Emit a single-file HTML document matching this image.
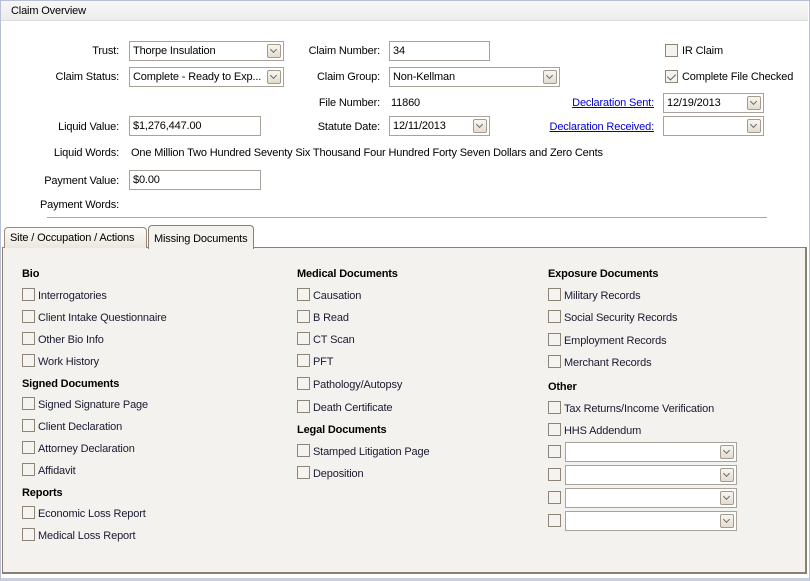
<!DOCTYPE html><html><head><style>
*{box-sizing:border-box;margin:0;padding:0}
body{width:810px;height:581px;background:#fff;font-family:"Liberation Sans",sans-serif;font-size:11px;letter-spacing:-0.15px;color:#000;position:relative;overflow:hidden}
.a,.lbl,.it,.h{transform:translateY(1px)}
.a{position:absolute;white-space:nowrap}
.frame{position:absolute;left:0;top:0;width:810px;height:581px;border:1px solid #b9c0d4;border-bottom:3px solid #c8d0e0}
.hdr{position:absolute;left:1px;top:1px;width:807px;height:20px;background:linear-gradient(#f7f7f7,#ececec);border-bottom:1px solid #dcdcdc;padding:4px 10px}
.lbl{position:absolute;text-align:right;white-space:nowrap}
.in{position:absolute;height:20px;border:1px solid #a9a29a;background:#fff;padding:3px 3px;white-space:nowrap;overflow:hidden}
.dd{position:absolute;right:2px;top:2px;width:14px;height:14px;border:1px solid #a59b8c;border-radius:2px;background:linear-gradient(#f8f6f0,#e3ddd0)}
.dd:after{content:"";position:absolute;left:3px;top:2px;width:4px;height:4px;border-right:1px solid #6b6b6b;border-bottom:1px solid #6b6b6b;transform:rotate(45deg)}
.cb{position:absolute;width:13px;height:13px;border:1px solid #8e8478;background:#f5f3ef}
.ck:after{content:"";position:absolute;left:3px;top:1px;width:4px;height:7px;border-right:1px solid #666;border-bottom:1px solid #666;transform:rotate(45deg)}
a{color:#00c;text-decoration:underline}
.panel{position:absolute;left:2px;top:247px;width:805px;height:327px;background:#f4f2ee;border:1px solid #8c7f70;border-right:2px solid #8c7f70;border-bottom:2px solid #8c7f70}
.tab{position:absolute;border:1px solid #998b7b;border-bottom:none;border-radius:4px 4px 0 0;padding:5px 5px;white-space:nowrap;overflow:hidden}
.h{position:absolute;font-weight:bold;white-space:nowrap}
.it{position:absolute;white-space:nowrap;color:#1a1a30}
</style></head><body>
<div class="frame"></div>
<div class="hdr">Claim Overview</div>

<div class="lbl" style="right:691px;top:44px">Trust:</div>
<div class="in" style="left:129px;top:41px;width:155px">Thorpe Insulation<div class="dd"></div></div>
<div class="lbl" style="right:691px;top:70px">Claim Status:</div>
<div class="in" style="left:129px;top:67px;width:155px">Complete - Ready to Exp...<div class="dd"></div></div>
<div class="lbl" style="right:691px;top:120px">Liquid Value:</div>
<div class="in" style="left:129px;top:116px;width:132px">$1,276,447.00</div>
<div class="lbl" style="right:691px;top:146px">Liquid Words:</div>
<div class="a" style="left:131px;top:146px">One Million Two Hundred Seventy Six Thousand Four Hundred Forty Seven Dollars and Zero Cents</div>
<div class="lbl" style="right:691px;top:174px">Payment Value:</div>
<div class="in" style="left:129px;top:170px;width:132px">$0.00</div>
<div class="lbl" style="right:691px;top:198px">Payment Words:</div>
<div style="position:absolute;left:47px;top:217px;width:720px;height:1px;background:#a8a8a8"></div>

<div class="lbl" style="right:430px;top:44px">Claim Number:</div>
<div class="in" style="left:389px;top:41px;width:101px">34</div>
<div class="lbl" style="right:430px;top:70px">Claim Group:</div>
<div class="in" style="left:389px;top:67px;width:171px">Non-Kellman<div class="dd"></div></div>
<div class="lbl" style="right:430px;top:96px">File Number:</div>
<div class="a" style="left:391px;top:96px">11860</div>
<div class="lbl" style="right:430px;top:120px">Statute Date:</div>
<div class="in" style="left:389px;top:116px;width:101px">12/11/2013<div class="dd"></div></div>

<div class="cb" style="left:665px;top:44px"></div><div class="a" style="left:682px;top:44px">IR Claim</div>
<div class="cb ck" style="left:665px;top:70px"></div><div class="a" style="left:682px;top:70px">Complete File Checked</div>
<div class="lbl" style="right:156px;top:96px"><a>Declaration Sent:</a></div>
<div class="in" style="left:663px;top:93px;width:101px">12/19/2013<div class="dd"></div></div>
<div class="lbl" style="right:156px;top:120px"><a>Declaration Received:</a></div>
<div class="in" style="left:663px;top:116px;width:101px"><div class="dd"></div></div>

<div class="panel"></div>
<div class="tab" style="left:4px;top:227px;width:143px;height:21px;padding-top:4px;background:linear-gradient(#fbfaf7,#ece8df)">Site / Occupation / Actions</div>
<div class="tab" style="left:148px;top:225px;width:106px;height:24px;padding-top:7px;background:#f4f2ee;border-color:#8c7f70">Missing Documents</div>

<div class="h" style="left:22px;top:267px">Bio</div>
<div class="cb" style="left:22px;top:288px"></div><div class="it" style="left:38px;top:289px">Interrogatories</div>
<div class="cb" style="left:22px;top:310px"></div><div class="it" style="left:38px;top:311px">Client Intake Questionnaire</div>
<div class="cb" style="left:22px;top:332px"></div><div class="it" style="left:38px;top:333px">Other Bio Info</div>
<div class="cb" style="left:22px;top:354px"></div><div class="it" style="left:38px;top:355px">Work History</div>
<div class="h" style="left:22px;top:377px">Signed Documents</div>
<div class="cb" style="left:22px;top:397px"></div><div class="it" style="left:38px;top:398px">Signed Signature Page</div>
<div class="cb" style="left:22px;top:419px"></div><div class="it" style="left:38px;top:420px">Client Declaration</div>
<div class="cb" style="left:22px;top:441px"></div><div class="it" style="left:38px;top:442px">Attorney Declaration</div>
<div class="cb" style="left:22px;top:463px"></div><div class="it" style="left:38px;top:464px">Affidavit</div>
<div class="h" style="left:22px;top:486px">Reports</div>
<div class="cb" style="left:22px;top:506px"></div><div class="it" style="left:38px;top:507px">Economic Loss Report</div>
<div class="cb" style="left:22px;top:528px"></div><div class="it" style="left:38px;top:529px">Medical Loss Report</div>

<div class="h" style="left:297px;top:267px">Medical Documents</div>
<div class="cb" style="left:297px;top:288px"></div><div class="it" style="left:313px;top:289px">Causation</div>
<div class="cb" style="left:297px;top:310px"></div><div class="it" style="left:313px;top:311px">B Read</div>
<div class="cb" style="left:297px;top:332px"></div><div class="it" style="left:313px;top:333px">CT Scan</div>
<div class="cb" style="left:297px;top:354px"></div><div class="it" style="left:313px;top:355px">PFT</div>
<div class="cb" style="left:297px;top:377px"></div><div class="it" style="left:313px;top:378px">Pathology/Autopsy</div>
<div class="cb" style="left:297px;top:400px"></div><div class="it" style="left:313px;top:401px">Death Certificate</div>
<div class="h" style="left:297px;top:423px">Legal Documents</div>
<div class="cb" style="left:297px;top:444px"></div><div class="it" style="left:313px;top:445px">Stamped Litigation Page</div>
<div class="cb" style="left:297px;top:466px"></div><div class="it" style="left:313px;top:467px">Deposition</div>

<div class="h" style="left:548px;top:267px">Exposure Documents</div>
<div class="cb" style="left:548px;top:288px"></div><div class="it" style="left:564px;top:289px">Military Records</div>
<div class="cb" style="left:548px;top:310px"></div><div class="it" style="left:564px;top:311px">Social Security Records</div>
<div class="cb" style="left:548px;top:333px"></div><div class="it" style="left:564px;top:334px">Employment Records</div>
<div class="cb" style="left:548px;top:355px"></div><div class="it" style="left:564px;top:356px">Merchant Records</div>
<div class="h" style="left:548px;top:380px">Other</div>
<div class="cb" style="left:548px;top:401px"></div><div class="it" style="left:564px;top:402px">Tax Returns/Income Verification</div>
<div class="cb" style="left:548px;top:423px"></div><div class="it" style="left:564px;top:424px">HHS Addendum</div>
<div class="cb" style="left:548px;top:445px"></div><div class="in" style="left:565px;top:442px;width:172px"><div class="dd"></div></div>
<div class="cb" style="left:548px;top:468px"></div><div class="in" style="left:565px;top:465px;width:172px"><div class="dd"></div></div>
<div class="cb" style="left:548px;top:491px"></div><div class="in" style="left:565px;top:488px;width:172px"><div class="dd"></div></div>
<div class="cb" style="left:548px;top:514px"></div><div class="in" style="left:565px;top:511px;width:172px"><div class="dd"></div></div>
</body></html>
